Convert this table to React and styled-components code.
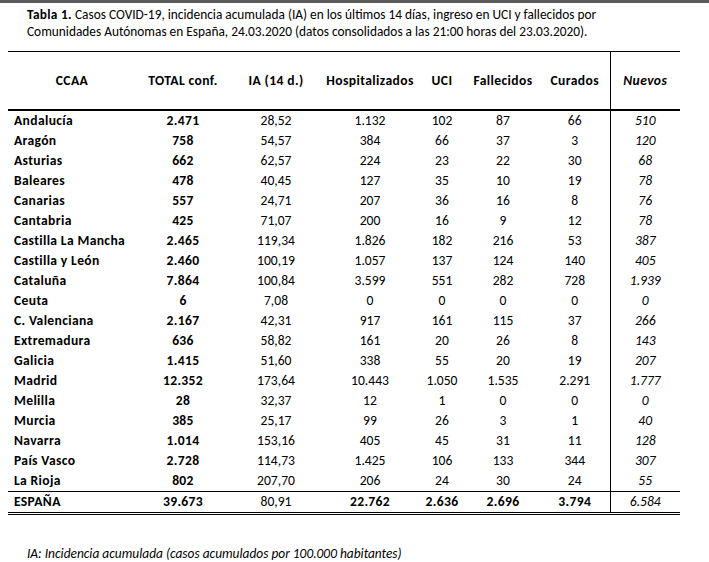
import React from "react";
import styled, { createGlobalStyle } from "styled-components";

const Global = createGlobalStyle`
  html, body { margin: 0; padding: 0; background: #fff; }
  body { font-family: Carlito, "Liberation Sans Narrow", "Open Sans", sans-serif; color: #000; }
`;

const Page = styled.div`
  width: 709px;
  height: 562px;
  border-top: 3px solid #5b5b5b;
  box-sizing: border-box;
  background: #fff;
  position: relative;
  overflow: hidden;
`;

const Caption = styled.p`
  margin: 3px 0 0 27px;
  font-size: 13.35px;
  line-height: 17px;
  width: 640px;
`;

const Strong = styled.span`
  font-weight: 700;
  letter-spacing: 0.3px;
`;

const Table = styled.table`
  margin: 11px 0 0 8px;
  border-collapse: collapse;
  table-layout: fixed;
  width: 672px;
  font-size: 13.6px;
  border-top: 1px solid #000;
`;

const HeadCell = styled.th`
  height: 57px;
  padding: 0;
  font-weight: 700;
  letter-spacing: 0.4px;
  text-align: center;
  font-style: ${(p) => (p.$italic ? "italic" : "normal")};
  border-left: ${(p) => (p.$sep ? "1px solid #000" : "none")};
  border-bottom: 2px solid #000;
`;

const Cell = styled.td`
  height: 20px;
  padding: ${(p) => (p.$left ? "0 0 0 6px" : "0")};
  line-height: 20px;
  text-align: ${(p) => (p.$left ? "left" : "center")};
  font-weight: ${(p) => (p.$bold ? 700 : 400)};
  letter-spacing: ${(p) => (p.$bold ? "0.35px" : "0")};
  font-style: ${(p) => (p.$italic ? "italic" : "normal")};
  border-left: ${(p) => (p.$sep ? "1px solid #000" : "none")};
  white-space: nowrap;
`;

const Row = styled.tr`
  border-top: ${(p) => (p.$total ? "1px solid #000" : "none")};
  border-bottom: ${(p) => (p.$total ? "3px double #000" : "none")};
`;

const Note = styled.p`
  position: absolute;
  left: 27px;
  top: 542px;
  margin: 0;
  font-size: 13.4px;
  font-style: italic;
  line-height: 17px;
`;

const cols = [128, 94, 92, 96, 48, 74, 70, 70];
const headers = ["CCAA", "TOTAL conf.", "IA (14 d.)", "Hospitalizados", "UCI", "Fallecidos", "Curados", "Nuevos"];

const rows = [
  ["Andalucía", "2.471", "28,52", "1.132", "102", "87", "66", "510"],
  ["Aragón", "758", "54,57", "384", "66", "37", "3", "120"],
  ["Asturias", "662", "62,57", "224", "23", "22", "30", "68"],
  ["Baleares", "478", "40,45", "127", "35", "10", "19", "78"],
  ["Canarias", "557", "24,71", "207", "36", "16", "8", "76"],
  ["Cantabria", "425", "71,07", "200", "16", "9", "12", "78"],
  ["Castilla La Mancha", "2.465", "119,34", "1.826", "182", "216", "53", "387"],
  ["Castilla y León", "2.460", "100,19", "1.057", "137", "124", "140", "405"],
  ["Cataluña", "7.864", "100,84", "3.599", "551", "282", "728", "1.939"],
  ["Ceuta", "6", "7,08", "0", "0", "0", "0", "0"],
  ["C. Valenciana", "2.167", "42,31", "917", "161", "115", "37", "266"],
  ["Extremadura", "636", "58,82", "161", "20", "26", "8", "143"],
  ["Galicia", "1.415", "51,60", "338", "55", "20", "19", "207"],
  ["Madrid", "12.352", "173,64", "10.443", "1.050", "1.535", "2.291", "1.777"],
  ["Melilla", "28", "32,37", "12", "1", "0", "0", "0"],
  ["Murcia", "385", "25,17", "99", "26", "3", "1", "40"],
  ["Navarra", "1.014", "153,16", "405", "45", "31", "11", "128"],
  ["País Vasco", "2.728", "114,73", "1.425", "106", "133", "344", "307"],
  ["La Rioja", "802", "207,70", "206", "24", "30", "24", "55"],
];

const total = ["ESPAÑA", "39.673", "80,91", "22.762", "2.636", "2.696", "3.794", "6.584"];

export default function App() {
  return (
    <>
      <Global />
      <Page>
        <Caption>
          <Strong>Tabla 1.</Strong> Casos COVID-19, incidencia acumulada (IA) en los últimos 14 días, ingreso en UCI y fallecidos por Comunidades Autónomas en España, 24.03.2020 (datos consolidados a las 21:00 horas del 23.03.2020).
        </Caption>
        <Table>
          <colgroup>
            {cols.map((w, i) => (
              <col key={i} style={{ width: w }} />
            ))}
          </colgroup>
          <thead>
            <tr>
              {headers.map((h, i) => (
                <HeadCell key={h} $italic={i === 7} $sep={i === 7}>
                  {h}
                </HeadCell>
              ))}
            </tr>
          </thead>
          <tbody>
            {rows.map((r) => (
              <Row key={r[0]}>
                {r.map((v, i) => (
                  <Cell key={i} $left={i === 0} $bold={i < 2} $italic={i === 7} $sep={i === 7}>
                    {v}
                  </Cell>
                ))}
              </Row>
            ))}
            <Row $total>
              {total.map((v, i) => (
                <Cell
                  key={i}
                  $left={i === 0}
                  $bold={i !== 2 && i !== 7}
                  $italic={i === 7}
                  $sep={i === 7}
                >
                  {v}
                </Cell>
              ))}
            </Row>
          </tbody>
        </Table>
        <Note>IA: Incidencia acumulada (casos acumulados por 100.000 habitantes)</Note>
      </Page>
    </>
  );
}
